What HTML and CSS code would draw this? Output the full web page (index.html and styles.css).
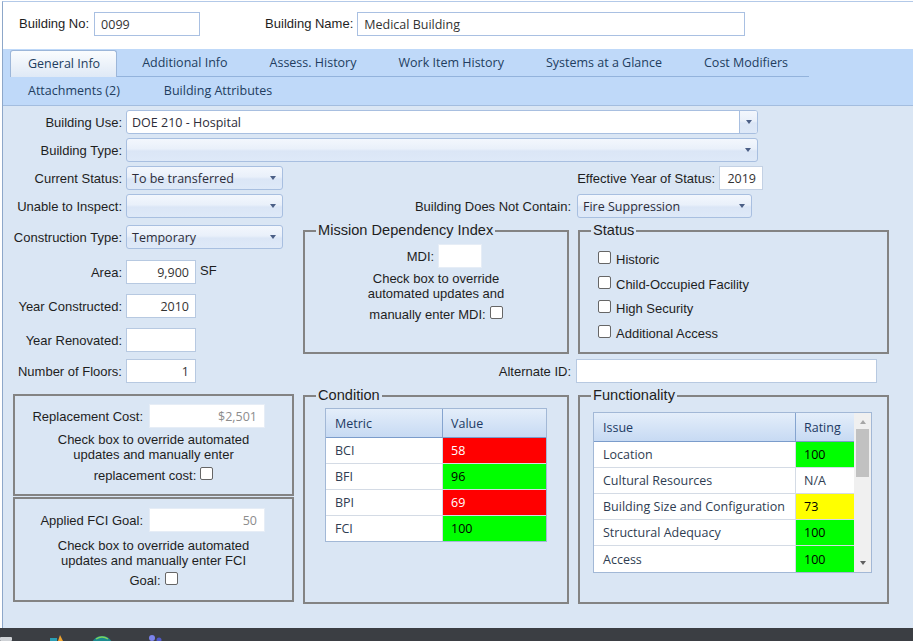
FILE: index.html
```html
<!DOCTYPE html>
<html lang="en">
<head>
<meta charset="utf-8">
<title>Building - General Info</title>
<link rel="stylesheet" href="styles.css">
</head>
<body>
<div class="frame">
  <div class="header">
    <span class="hlabel">Building No:</span>
    <div class="hfield hno">0099</div>
    <span class="hlabel hname-lbl">Building Name:</span>
    <div class="hfield hname">Medical Building</div>
  </div>

  <div class="tabs">
    <div class="tabrow r1">
      <div class="tab active">General Info</div>
      <div class="tab second">Additional Info</div>
      <div class="tab">Assess. History</div>
      <div class="tab">Work Item History</div>
      <div class="tab">Systems at a Glance</div>
      <div class="tab">Cost Modifiers</div>
    </div>
    <div class="tabrow r2">
      <div class="tab2 first">Attachments (2)</div>
      <div class="tab2">Building Attributes</div>
    </div>
  </div>

  <div class="content">
    <div class="row">
      <span class="lbl">Building Use:</span>
      <div class="sel white wide">DOE 210 - Hospital<span class="btn"><i class="arr"></i></span></div>
    </div>
    <div class="row">
      <span class="lbl">Building Type:</span>
      <div class="sel wide"><i class="arr"></i></div>
    </div>
    <div class="row r3">
      <div class="grp"><span class="lbl">Current Status:</span><div class="sel short">To be transferred<i class="arr"></i></div></div>
      <div class="grp"><span class="lbl-r">Effective Year of Status:</span><div class="fld yr">2019</div></div>
    </div>
    <div class="row r4">
      <div class="grp"><span class="lbl">Unable to Inspect:</span><div class="sel short"><i class="arr"></i></div></div>
      <span class="lbl-flex">Building Does Not Contain:</span>
      <div class="sel fire">Fire Suppression<i class="arr"></i></div>
    </div>

    <div class="block5">
      <div class="leftcol">
        <div class="lrow"><span class="lbl">Construction Type:</span><div class="sel short">Temporary<i class="arr"></i></div></div>
        <div class="lrow area"><span class="lbl">Area:</span><div class="fld num">9,900</div><span class="unit">SF</span></div>
        <div class="lrow"><span class="lbl">Year Constructed:</span><div class="fld num">2010</div></div>
        <div class="lrow"><span class="lbl">Year Renovated:</span><div class="fld num"></div></div>
        <div class="lrow floors"><span class="lbl">Number of Floors:</span><div class="fld num">1</div></div>
      </div>
      <div class="rightarea">
        <div class="fsrow">
          <fieldset class="fs mdi">
            <legend>Mission Dependency Index</legend>
            <div class="mdi-row"><span>MDI:</span><div class="fld faint mdi-in"></div></div>
            <div class="note mdi-note">Check box to override<br>automated updates and</div>
            <div class="note-last mdi-last">manually enter MDI:<i class="cb"></i></div>
          </fieldset>
          <fieldset class="fs status">
            <legend>Status</legend>
            <div class="st-list">
              <div class="st-row"><i class="cb"></i><span>Historic</span></div>
              <div class="st-row"><i class="cb"></i><span>Child-Occupied Facility</span></div>
              <div class="st-row"><i class="cb"></i><span>High Security</span></div>
              <div class="st-row"><i class="cb"></i><span>Additional Access</span></div>
            </div>
          </fieldset>
        </div>
        <div class="altrow"><span class="lbl-flex">Alternate ID:</span><div class="fld alt"></div></div>
      </div>
    </div>

    <div class="block6">
      <div class="costcol">
        <div class="costbox b1">
          <div class="cost-row"><span class="cost-lbl">Replacement Cost:</span><div class="fld faint cost-in">$2,501</div></div>
          <div class="note n1">Check box to override automated<br>updates and manually enter</div>
          <div class="note-last nl1">replacement cost:<i class="cb"></i></div>
        </div>
        <div class="costbox b2">
          <div class="cost-row"><span class="cost-lbl">Applied FCI Goal:</span><div class="fld faint cost-in">50</div></div>
          <div class="note n2">Check box to override automated<br>updates and manually enter FCI</div>
          <div class="note-last nl2">Goal:<i class="cb"></i></div>
        </div>
      </div>

      <fieldset class="fs cond">
        <legend>Condition</legend>
        <div class="cgrid">
          <div class="ghdr"><div class="gc c1">Metric</div><div class="gc c2">Value</div></div>
          <div class="grow"><div class="gc c1">BCI</div><div class="gc c2 red">58</div></div>
          <div class="grow"><div class="gc c1">BFI</div><div class="gc c2 green">96</div></div>
          <div class="grow"><div class="gc c1">BPI</div><div class="gc c2 red">69</div></div>
          <div class="grow"><div class="gc c1">FCI</div><div class="gc c2 green">100</div></div>
        </div>
      </fieldset>

      <fieldset class="fs func">
        <legend>Functionality</legend>
        <div class="fgrid">
          <div class="ftable">
            <div class="ghdr"><div class="gc c1">Issue</div><div class="gc c2">Rating</div></div>
            <div class="grow"><div class="gc c1">Location</div><div class="gc c2 green">100</div></div>
            <div class="grow"><div class="gc c1">Cultural Resources</div><div class="gc c2">N/A</div></div>
            <div class="grow"><div class="gc c1">Building Size and Configuration</div><div class="gc c2 yellow">73</div></div>
            <div class="grow"><div class="gc c1">Structural Adequacy</div><div class="gc c2 green">100</div></div>
            <div class="grow"><div class="gc c1">Access</div><div class="gc c2 green">100</div></div>
          </div>
          <div class="sb"><i class="sb-up"></i><i class="sb-thumb"></i><i class="sb-down"></i></div>
        </div>
      </fieldset>
    </div>
  </div>
</div>
<div class="taskbar">
  <svg class="tb-icons" width="913" height="13" viewBox="0 0 913 13">
    <rect x="0" y="9" width="12" height="4" rx="1" fill="#cfd2d6"/>
    <rect x="50" y="10" width="7" height="3" fill="#2a9fb5"/>
    <path d="M58 13 L60 7 L63 13 Z" fill="#f0a531"/>
    <circle cx="102" cy="19" r="11" fill="#1b8a8f"/>
    <path d="M96 11 Q102 7 108 11" stroke="#7ed35a" stroke-width="1.5" fill="none"/>
    <circle cx="152" cy="10" r="3" fill="#7b83eb"/>
    <circle cx="159" cy="12" r="2.5" fill="#5059c9"/>
  </svg>
</div>
</body>
</html>
```

FILE: styles.css
```css
* { box-sizing: border-box; }
html, body { margin: 0; padding: 0; background: #ffffff; }
body {
  width: 913px;
  height: 641px;
  overflow: hidden;
  font-family: "Liberation Sans", Arial, sans-serif;
  font-size: 13px;
  color: #1e1e1e;
}

.frame {
  margin: 1px 0 0 2px;
  height: 627px;
  border-left: 1px solid #8da7c9;
  border-top: 1px solid #b3c9e8;
  display: flex;
  flex-direction: column;
}

/* header */
.header {
  height: 47px;
  flex: none;
  display: flex;
  align-items: flex-start;
  padding: 10px 0 0 16px;
}
.hlabel { line-height: 24px; margin-right: 5px; }
.hname-lbl { margin-left: 65px; margin-right: 4px; }
.hfield {
  height: 24px;
  border: 1px solid #a9c0e2;
  background: #fff;
  font-family: "Open Sans", sans-serif;
  font-size: 12.5px;
  color: #333;
  padding-left: 6px;
  display: flex;
  align-items: center;
}
.hno { width: 106px; }
.hname { width: 388px; }

/* tabs */
.tabs { height: 56px; flex: none; background: #bfd9f9; }
.tabrow { display: flex; height: 28px; }
.tabrow.r1 { padding-top: 1px; }
.tab {
  height: 27px;
  line-height: 26px;
  padding: 0 21px;
  border-bottom: 1px solid #93b3dc;
  font-family: "Open Sans", sans-serif;
  font-size: 12.5px;
  color: #223d60;
  white-space: nowrap;
}
.tab.active {
  margin-left: 7px;
  padding: 0 16px 0 17px;
  border: 1px solid #9cb6d9;
  border-bottom: none;
  border-radius: 3px 3px 0 0;
  background: linear-gradient(#fafcfe, #dfe9f6);
}
.tab.second { padding-left: 25px; }
.tab2 {
  line-height: 28px;
  padding: 0 22px;
  font-family: "Open Sans", sans-serif;
  font-size: 12.5px;
  color: #223d60;
  white-space: nowrap;
}
.tab2.first { margin-left: 3px; }

/* content */
.content {
  flex: 1;
  background: #dae6f4;
  border-top: 1px solid #a3bddf;
  padding-top: 4px;
}
.row { display: flex; align-items: center; height: 24px; margin-bottom: 4px; }
.grp { display: flex; align-items: center; }
.lbl { width: 119px; margin-right: 4px; text-align: right; white-space: nowrap; }
.lbl-r { margin-right: 4px; white-space: nowrap; }
.lbl-flex { flex: 1; text-align: right; white-space: nowrap; }
.r3 { width: 760px; justify-content: space-between; }
.r4 { width: 749px; margin-bottom: 0; }
.r4 .grp { width: 280px; }
.r4 .lbl-flex { margin-right: 6px; }

.sel {
  height: 24px;
  border: 1px solid #a8bfe0;
  border-radius: 3px;
  background: linear-gradient(#f3f7fd 0%, #e9f0fa 45%, #dbe6f6 55%, #dee9f8 100%);
  display: flex;
  align-items: center;
  padding-left: 5px;
  font-family: "Open Sans", sans-serif;
  font-size: 12.5px;
  color: #2d2d3a;
  white-space: nowrap;
}
.sel.white { background: #fff; padding-right: 0; }
.sel.wide { width: 632px; }
.sel.short { width: 157px; }
.sel.fire { width: 175px; }
.arr {
  margin-left: auto;
  margin-right: 6px;
  width: 0;
  height: 0;
  border-left: 3.5px solid transparent;
  border-right: 3.5px solid transparent;
  border-top: 4px solid #4b5f86;
}
.btn {
  margin-left: auto;
  width: 18px;
  height: 22px;
  border-left: 1px solid #a8bfe0;
  border-radius: 0 2px 2px 0;
  background: linear-gradient(#f3f7fd 0%, #e9f0fa 45%, #dbe6f6 55%, #dee9f8 100%);
  display: flex;
  align-items: center;
  justify-content: center;
}
.btn .arr { margin: 0; }

.fld {
  height: 24px;
  background: #fff;
  border: 1px solid #b7c9e1;
  display: flex;
  align-items: center;
  font-family: "Open Sans", sans-serif;
  font-size: 12.5px;
  color: #333;
}
.fld.faint { border-color: #e6edf6; }
.fld.yr { width: 44px; justify-content: flex-end; padding-right: 6px; border-color: #c3d1e4; }
.fld.num { width: 70px; justify-content: flex-end; padding-right: 6px; }
.unit { margin-left: 4px; margin-bottom: 3px; }

/* block 5 */
.block5 { display: flex; align-items: flex-start; }
.leftcol { width: 300px; flex: none; display: flex; flex-direction: column; gap: 10px; padding-top: 7px; }
.lrow { display: flex; align-items: center; height: 24px; }
.lrow.area { margin-top: 1px; }
.lrow.floors { margin-top: -3px; }
.rightarea { display: flex; flex-direction: column; }
.fsrow { display: flex; gap: 9px; margin-top: 4px; }

.fs {
  margin: 0;
  padding: 0;
  min-width: 0;
  border: 2px solid #838383;
}
.fs legend {
  margin-left: 11px;
  padding: 0 2px;
  font-size: 14.6px;
  line-height: 17px;
  color: #1e1e1e;
}
.fs.mdi { width: 266px; height: 132px; }
.fs.status { width: 311px; height: 132px; }

.mdi-row { display: flex; justify-content: center; align-items: center; margin-top: 5px; padding-left: 17px; }
.mdi-in { width: 44px; margin-left: 4px; }
.note { text-align: center; line-height: 15px; }
.mdi-note { margin-top: 3px; }
.note-last { display: flex; justify-content: center; align-items: center; height: 20px; }
.mdi-last { margin-top: 3px; }

.cb {
  display: block;
  width: 13px;
  height: 13px;
  border: 1px solid #666;
  border-radius: 2px;
  background: #fff;
  margin-bottom: 4px;
}
.note-last .cb { margin-left: 4px; }

.st-list { padding: 8px 0 0 18px; }
.st-row { display: flex; align-items: center; height: 24.7px; }
.st-row .cb { margin-right: 5px; }

.altrow { display: flex; align-items: center; width: 574px; margin-top: 5px; }
.altrow .lbl-flex { margin-right: 5px; }
.fld.alt { width: 301px; }

/* block 6 */
.block6 { display: flex; align-items: flex-start; margin-top: 4px; }
.costcol { width: 300px; flex: none; padding: 7px 0 0 10px; }
.costbox { width: 281px; border: 2px solid #838383; }
.costbox.b1 { height: 102px; padding-top: 8px; }
.costbox.b2 { height: 105px; padding-top: 9px; margin-top: 1px; }
.cost-row { display: flex; align-items: center; }
.cost-lbl { width: 128px; text-align: right; margin-right: 6px; white-space: nowrap; }
.cost-in { width: 116px; justify-content: flex-end; padding-right: 7px; color: #8c8c8c; }
.n1 { margin-top: 4px; }
.nl1 { margin-top: 3px; }
.n2 { margin-top: 6px; }
.nl2 { margin-top: 2px; }

.fs.cond { width: 266px; height: 217px; }
.fs.func { width: 311px; height: 217px; margin-left: 9px; }

.cgrid {
  width: 222px;
  margin: 4px 0 0 20px;
  border: 1px solid #a2b8d6;
  background: #fff;
}
.ghdr {
  display: flex;
  height: 29px;
  background: linear-gradient(#e4eefa, #c7daf3);
  border-bottom: 1px solid #7b9ccb;
}
.ghdr .gc { color: #1d3a63; }
.grow { display: flex; height: 26px; border-bottom: 1px solid #d4dbe5; }
.grow:last-child { border-bottom: none; height: 25px; }
.gc {
  display: flex;
  align-items: center;
  font-family: "Open Sans", sans-serif;
  font-size: 12.5px;
  color: #2f3d52;
  white-space: nowrap;
}
.c1 { padding-left: 9px; border-right: 1px solid #d4dbe5; }
.ghdr .c1 { border-right-color: #85a4cf; }
.c2 { padding-left: 8px; }
.cgrid .c1 { width: 117px; }
.cgrid .c2 { flex: 1; }
.red { background: #ff0000; color: #ffffff; }
.green { background: #00ff00; color: #000000; }
.yellow { background: #ffff00; color: #000000; }

.fgrid {
  display: flex;
  width: 279px;
  margin: 8px 0 0 13px;
  border: 1px solid #a2b8d6;
  background: #fff;
}
.ftable { width: 260px; flex: none; }
.ftable .grow:last-child { height: 26px; }
.fgrid .c1 { width: 202px; }
.fgrid .c2 { width: 58px; }
.sb {
  width: 17px;
  background: #f0f0f0;
  display: flex;
  flex-direction: column;
  align-items: center;
}
.sb-up {
  display: block;
  margin-top: 7px;
  width: 0;
  height: 0;
  border-left: 3.5px solid transparent;
  border-right: 3.5px solid transparent;
  border-bottom: 4px solid #a6a6a6;
}
.sb-thumb {
  display: block;
  margin-top: 5px;
  width: 13px;
  height: 48px;
  background: #c1c1c1;
}
.sb-down {
  display: block;
  margin-top: auto;
  margin-bottom: 7px;
  width: 0;
  height: 0;
  border-left: 3.5px solid transparent;
  border-right: 3.5px solid transparent;
  border-top: 4px solid #606060;
}

/* taskbar */
.taskbar { height: 13px; background: #3b3e43; overflow: hidden; }
.tb-icons { display: block; }
```
